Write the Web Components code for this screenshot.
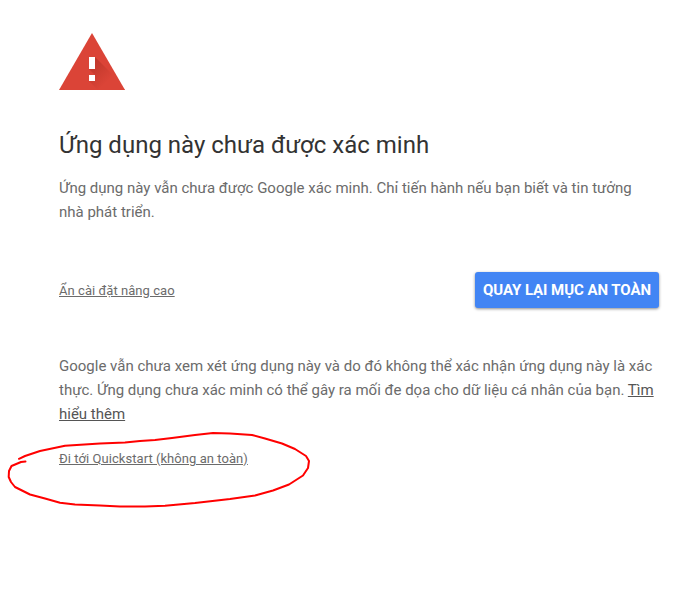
<!DOCTYPE html>
<html lang="vi"><head><meta charset="utf-8"><title>Ứng dụng này chưa được xác minh</title>
<style>body{margin:0;background:#fff;font-family:Roboto,"Liberation Sans",sans-serif}</style></head><body>
<warning-page></warning-page>
<script>
class WarningIcon extends HTMLElement{constructor(){super();this.attachShadow({mode:'open'}).innerHTML=`<style>:host{display:block;width:66px;height:57px}svg{display:block}</style>
<svg width="66" height="57" viewBox="0 0 66 57"><defs><linearGradient id="g" gradientUnits="userSpaceOnUse" x1="33" y1="30" x2="50" y2="47"><stop offset="0" stop-color="#b93428"/><stop offset="1" stop-color="#db4437"/></linearGradient></defs><path d="M33 0 66 57H0z" fill="#db4437"/><path d="M36 24 52 40 66 57H39L30 48 36 47V42L30 36z" fill="url(#g)" opacity=".8"/><path d="M30 24h6v12h-6zM30 42h6v6h-6z" fill="#fff"/></svg>`}}
customElements.define('warning-icon',WarningIcon);
class TextLink extends HTMLElement{constructor(){super();this.attachShadow({mode:'open'}).innerHTML=`<style>:host{display:inline;text-decoration:underline;cursor:pointer}</style><slot></slot>`}}
customElements.define('text-link',TextLink);
class SafetyButton extends HTMLElement{constructor(){super();this.attachShadow({mode:'open'}).innerHTML=`<style>:host{display:block}button{display:block;width:184px;height:36px;padding:0;border:0;border-radius:3px;background:#4285f4;color:#fff;font:700 15px/36px Roboto,sans-serif;letter-spacing:-.06px;white-space:nowrap;box-shadow:0 1px 3px rgba(0,0,0,.45)}</style><button><slot></slot></button>`}}
customElements.define('safety-button',SafetyButton);
class MarkerLoop extends HTMLElement{constructor(){super();this.attachShadow({mode:'open'}).innerHTML=`<style>:host{position:absolute;left:0;top:425px;width:320px;height:90px;pointer-events:none}svg{display:block}</style><svg width="320" height="90" viewBox="0 425 320 90" fill="none" stroke="#f00" stroke-width="2" stroke-linecap="round" stroke-linejoin="round"><path d="M25.500 461.500 21 462 11.500 466 9 471 8.700 477 11 482 15 487 22 490.500 30 494.500 45 498.500 60 502.700 75 504.500 100 505.500 120 506.500 145 506.500 165 505.700 195 503 230 499 255 495.500 273 490.500 289 484.500 303 475.500 308 468 309 461 306 456 295 449 282 443.500 265 438.500 252 435 230 433.500 213 433 195 435 172 438 155 440 140 441 125 442.500 100 443.500 65 445.700 40 451 25 456 19 458.800"/></svg>`}}
customElements.define('marker-loop',MarkerLoop);
class WarningPage extends HTMLElement{constructor(){super();this.attachShadow({mode:'open'}).innerHTML=`<style>
:host{display:block;position:relative;box-sizing:border-box;width:691px;height:605px;padding:33px 32px 0 59px;overflow:hidden;color:#6b6b6b}
h1{margin:39px 0 0;font-size:24px;line-height:32px;font-weight:400;color:#333}
p{margin:0;font-size:15px;line-height:24px;white-space:nowrap}.intro{margin-top:15px}.actions{display:flex;justify-content:space-between;align-items:center;margin-top:48px}.small{font-size:13px;line-height:20px;letter-spacing:.05px}.actions .small{padding-top:2px}.details{margin-top:46px}.details text-link{color:#555}.go{margin-top:23px}</style>
<warning-icon></warning-icon><h1>Ứng dụng này chưa được xác minh</h1><p class="intro">Ứng dụng này vẫn chưa được Google xác minh. Chỉ tiến hành nếu bạn biết và tin tưởng<br>nhà phát triển.</p>
<div class="actions"><text-link class="small">Ẩn cài đặt nâng cao</text-link><safety-button>QUAY LẠI MỤC AN TOÀN</safety-button></div>
<p class="details">Google vẫn chưa xem xét ứng dụng này và do đó không thể xác nhận ứng dụng này là xác<br>thực. Ứng dụng chưa xác minh có thể gây ra mối đe dọa cho dữ liệu cá nhân của bạn. <text-link>Tìm<br>hiểu thêm</text-link></p><div class="small go"><text-link>Đi tới Quickstart (không an toàn)</text-link></div><marker-loop></marker-loop>`}}
customElements.define('warning-page',WarningPage);
</script></body></html>
